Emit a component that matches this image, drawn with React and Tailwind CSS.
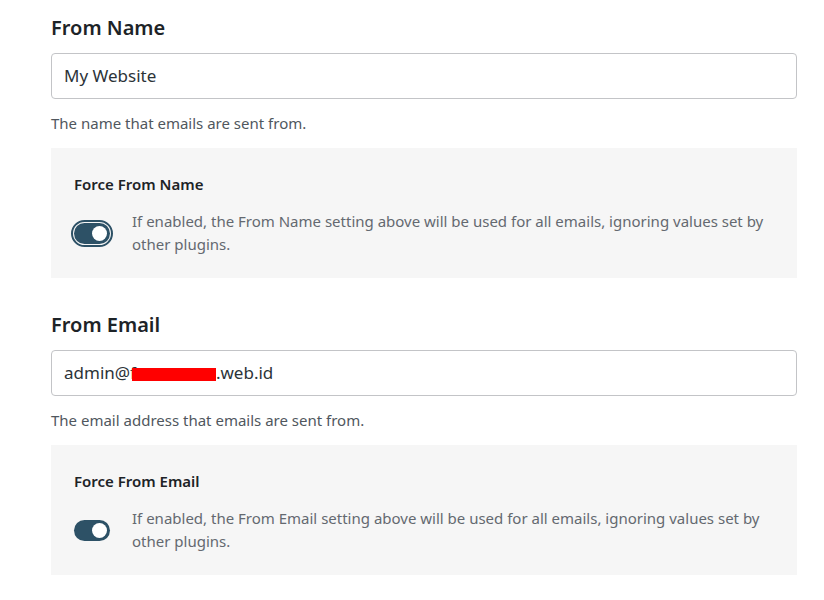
import { useState } from 'react';

function Toggle({ checked, focused }) {
  return (
    <span
      className={
        'relative inline-flex h-[21px] w-[36px] shrink-0 items-center rounded-full ' +
        (checked ? 'bg-[#2d5166] ' : 'bg-[#8c8f94] ') +
        (focused ? 'outline-2 outline-offset-1 outline-[#2d5166]' : '')
      }
    >
      <span
        className={
          'absolute top-[3px] h-[15px] w-[15px] rounded-full bg-white ' +
          (checked ? 'left-[18px]' : 'left-[3px]')
        }
      />
    </span>
  );
}

function Field({ label, value, help, forceTitle, forceText, focused }) {
  const [on] = useState(true);

  return (
    <section>
      <h2 className="text-[20px] font-semibold leading-[28px] text-[#1d2327]">{label}</h2>
      <div className="mt-[11px] flex h-[46px] items-center rounded-[4px] border border-[#c3c4c7] bg-white px-[12px] text-[17px] text-[#2c3338]">
        {value}
      </div>
      <p className="mt-[13px] text-[15px] leading-[22px] text-[#50575e]">{help}</p>
      <div className="mt-[14px] bg-[#f6f6f6] pl-[23px] pr-[24px] pt-[24px] pb-[22px]">
        <h3 className="text-[15px] font-semibold leading-[24px] text-[#1d2327]">{forceTitle}</h3>
        <div className="mt-[14px] flex items-center gap-[22px]">
          <Toggle checked={on} focused={focused} />
          <p className="text-[15px] leading-[23px] text-[#646970]">{forceText}</p>
        </div>
      </div>
    </section>
  );
}

export default function App() {
  return (
    <div
      className="min-h-[600px] bg-white pl-[51px] pr-[27px] pt-[14px]"
      style={{ fontFamily: '"Noto Sans", "Open Sans", sans-serif' }}
    >
      <Field
        label="From Name"
        value="My Website"
        help="The name that emails are sent from."
        forceTitle="Force From Name"
        forceText="If enabled, the From Name setting above will be used for all emails, ignoring values set by other plugins."
        focused
      />
      <div className="mt-[33px]">
        <Field
          label="From Email"
          value={
            <span className="flex items-center">
              admin@f
              <span className="ml-[-4px] mt-[2px] inline-block h-[13px] w-[84px] bg-[#ff0000]" />
              .web.id
            </span>
          }
          help="The email address that emails are sent from."
          forceTitle="Force From Email"
          forceText="If enabled, the From Email setting above will be used for all emails, ignoring values set by other plugins."
        />
      </div>
    </div>
  );
}
